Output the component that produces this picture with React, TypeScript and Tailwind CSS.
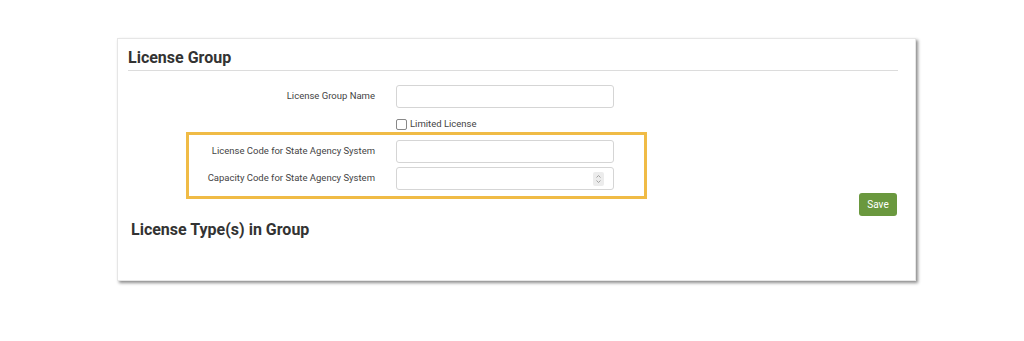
export default function App() {
  const font = { fontFamily: "Roboto, 'Liberation Sans', sans-serif" };
  return (
    <div className="w-[1024px] h-[341px] bg-white pt-[38px] pl-[117px]" style={font}>
      <div className="w-[799px] h-[243px] bg-white border border-[#e6e6e6] shadow-[2px_2px_3px_rgba(0,0,0,0.45)] flex flex-col">
        <div className="pl-[10px] pr-[17px] pt-[9px]">
          <h1 className="text-[16px] leading-[20px] font-bold text-[#333] pb-[2px] border-b border-[#dcdcdc]">
            License Group
          </h1>
        </div>

        <div className="ml-[68px] mt-[11px] flex flex-col">
          <div className="flex items-center border-[3px] border-transparent">
            <label className="w-[186px] text-right text-[9.5px] text-[#444]">License Group Name</label>
            <input className="ml-[21px] w-[218px] h-[23px] rounded-[3px] border border-[#d5d5d5] bg-white" />
          </div>
          <div className="flex items-center h-[12px] mt-[7px] ml-[210px]">
            <span className="w-[11px] h-[11px] rounded-[2px] border border-[#888] bg-white" />
            <span className="ml-[3px] text-[9.5px] text-[#444]">Limited License</span>
          </div>
          <div className="mt-[2px] w-[461px] border-[3px] border-[#f0bb46] pt-[5px] pb-[6px] flex flex-col gap-[4px]">
            <div className="flex items-center">
              <label className="w-[186px] text-right text-[9.5px] text-[#444]">License Code for State Agency System</label>
              <input className="ml-[21px] w-[218px] h-[23px] rounded-[3px] border border-[#d5d5d5] bg-white" />
            </div>
            <div className="flex items-center">
              <label className="w-[186px] text-right text-[9.5px] text-[#444]">Capacity Code for State Agency System</label>
              <div className="ml-[21px] w-[218px] h-[23px] rounded-[3px] border border-[#d5d5d5] bg-white flex items-center justify-end pr-[9px]">
                <span className="w-[11px] h-[14px] bg-[#ececec] rounded-[2px] flex items-center justify-center">
                  <svg width="7" height="10" viewBox="0 0 7 10" fill="none" stroke="#9a9a9a" strokeWidth="0.9">
                    <path d="M1.5 3.5 L3.5 1.5 L5.5 3.5" />
                    <path d="M1.5 6.5 L3.5 8.5 L5.5 6.5" />
                  </svg>
                </span>
              </div>
            </div>
          </div>
        </div>

        <div className="flex justify-end pr-[18px] -mt-[6px]">
          <button className="w-[38px] h-[23px] rounded-[3px] bg-[#6a983e] text-white text-[10px]">Save</button>
        </div>

        <h2 className="ml-[13px] mt-[4px] text-[16px] leading-[20px] font-bold text-[#333]">
          License Type(s) in Group
        </h2>
      </div>
    </div>
  );
}
